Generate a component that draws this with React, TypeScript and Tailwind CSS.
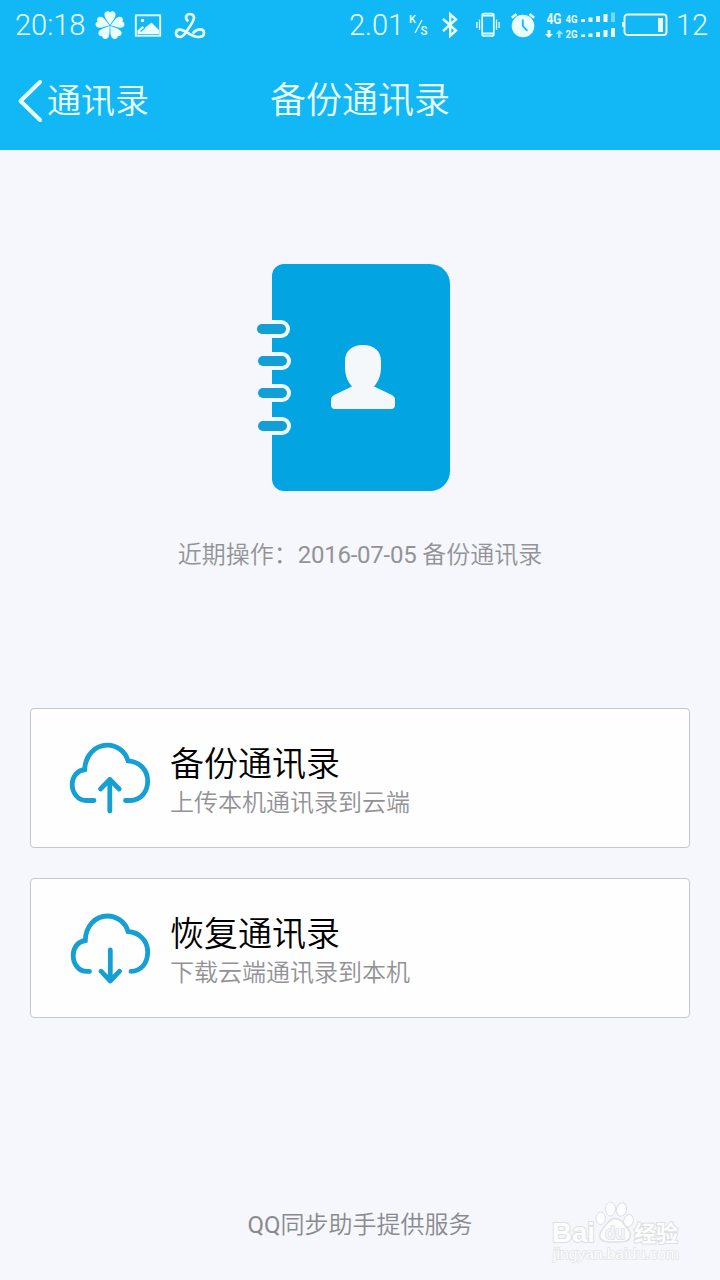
import type { ReactNode } from 'react'

const actions = [
  { title: '备份通讯录', desc: '上传本机通讯录到云端', icon: <CloudUpIcon /> },
  { title: '恢复通讯录', desc: '下载云端通讯录到本机', icon: <CloudDownIcon /> },
]

const rings = [
  { x: 17, y: 74 },
  { x: 18, y: 106 },
  { x: 18, y: 138 },
  { x: 18, y: 171 },
]

const petals = [0, 72, 144, 216, 288]

function CloverIcon() {
  return (
    <svg className="ml-[10px] shrink-0" width="30" height="30" viewBox="0 0 30 30" fill="currentColor">
      {petals.map((angle) => (
        <path
          key={angle}
          transform={`rotate(${angle} 15 15.5)`}
          d="M15 15C12.500 11 9 7.500 9.500 4.100C9.900 1 13.200 .5 15 2.300C16.800 .5 20.100 1 20.500 4.100C21 7.500 17.500 11 15 15Z"
        />
      ))}
    </svg>
  )
}

function PictureIcon() {
  return (
    <svg className="ml-[9px] mt-px shrink-0" width="28" height="23" viewBox="0 0 28 23">
      <rect x="1.8" y="1.3" width="24.4" height="20.4" fill="none" stroke="currentColor" strokeWidth="1.9" />
      <circle cx="8.5" cy="6.5" r="1.7" fill="currentColor" />
      <path d="M3.5 20V16.5L8.5 12L10.5 14L17.5 8.5L25 16V20Z" fill="currentColor" />
      <path d="M6.5 17.5L11 13.5" stroke="#12b7f5" strokeWidth="1.2" />
    </svg>
  )
}

function SwirlIcon() {
  return (
    <svg className="ml-[12px] mt-[2px] shrink-0" width="32" height="28" viewBox="0 0 32 28" fill="none" stroke="currentColor" strokeWidth="2.7" strokeLinecap="round">
      <path d="M13.500 8.500C10.500 5.500 12.500 2 15.800 2C18.800 2 20.600 4.200 19.800 7C18.700 11 15 15.500 12.500 19.500C10.300 22.800 8.400 25 5.800 25C3.600 25 2 23.500 2 21.300C2 19 3.700 17.600 6 17.600C11 17.600 16.500 25 24.500 25C27.800 25 30 23.500 30 21C30 18.700 28.300 17.300 26 17.300C23.500 17.300 21.300 18.500 19.500 20.500" />
    </svg>
  )
}

function BluetoothIcon() {
  return (
    <svg className="ml-[12px] shrink-0" width="18" height="28" viewBox="0 0 18 28" fill="none" stroke="currentColor" strokeWidth="2.4">
      <path d="M2 8L15 19.5L9.2 24.8V3.2L15 8.5L2 20" />
    </svg>
  )
}

function VibrateIcon() {
  return (
    <svg className="ml-[17px] shrink-0" width="24" height="26" viewBox="0 0 24 26" fill="none" stroke="currentColor">
      <rect x="6.2" y="1.5" width="11.6" height="22.5" rx="1.8" strokeWidth="1.7" />
      <path d="M6.5 3.5H17.5M6.5 21.5H17.5" strokeWidth="2.2" />
      <path d="M3.5 7.5V18M20.5 7.5V18M.9 10V16M23.1 10V16" strokeWidth="1.3" />
    </svg>
  )
}

function AlarmIcon() {
  return (
    <svg className="ml-[11px] shrink-0" width="24" height="26" viewBox="0 0 24 26" fill="none">
      <circle cx="12" cy="14" r="11.3" fill="currentColor" />
      <path d="M.8 5.8L5.4 1.9M23.2 5.8L18.6 1.9" stroke="currentColor" strokeWidth="2.6" />
      <path d="M11.8 7.5V14L16.3 18.8" stroke="#12b7f5" strokeWidth="1.8" />
    </svg>
  )
}

function SignalIcon() {
  return (
    <svg className="ml-[10px] shrink-0 font-['Roboto',sans-serif] font-bold" width="72" height="30" viewBox="0 0 72 30" fill="currentColor">
      <text x="1.5" y="13.7" fontSize="14.5" textLength="15" lengthAdjust="spacingAndGlyphs">4G</text>
      <text x="20.5" y="12.5" fontSize="11" textLength="12" lengthAdjust="spacingAndGlyphs">4G</text>
      <text x="20.5" y="28" fontSize="11" textLength="12" lengthAdjust="spacingAndGlyphs">2G</text>
      <path d="M2.5 20H5.500V24H8L4 28L0 24H2.500Z" />
      <path opacity=".6" d="M13 28H15.500V24H18.500L14.300 20L10.500 24H13Z" />
      <path d="M36 9H40V12H36ZM43.5 7.5H47.5V12H43.5ZM51 6H55V12H51ZM58.5 4H62.5V12H58.5Z" />
      <path opacity=".45" d="M66 2.5H70V12H66Z" />
      <path d="M36 24.5H40V27H36ZM43.5 23.5H47.5V27H43.5ZM51 22H55V27H51ZM58.5 20H62.5V27H58.5ZM66 18H70V27H66Z" />
    </svg>
  )
}

function BatteryIcon() {
  return (
    <svg className="ml-[5px] shrink-0" width="46" height="24" viewBox="0 0 46 24">
      <rect x="2.5" y="1.5" width="42" height="20.5" rx="3" fill="none" stroke="currentColor" strokeWidth="1.9" />
      <rect x="0" y="9" width="2.5" height="5" rx="1" fill="currentColor" />
      <rect x="36" y="5" width="5" height="14" fill="currentColor" />
    </svg>
  )
}

function StatusBar() {
  return (
    <div className="flex h-[50px] items-center pl-[15px] text-[#eaffff]">
      <span className="w-[70px] whitespace-nowrap text-[29px] leading-none">20:18</span>
      <CloverIcon />
      <PictureIcon />
      <SwirlIcon />
      <div className="ml-[143px] flex items-center">
        <span className="w-[54px] whitespace-nowrap text-[29px] leading-none">2.01</span>
        <svg className="ml-[6px] shrink-0 font-['Roboto',sans-serif] font-medium" width="20" height="24" viewBox="0 0 20 24" fill="currentColor">
          <text x="0" y="10" fontSize="11" textLength="7" lengthAdjust="spacingAndGlyphs">K</text>
          <path d="M13 7L6 20" stroke="currentColor" strokeWidth="1.3" />
          <text x="11.5" y="22" fontSize="12.5" textLength="7" lengthAdjust="spacingAndGlyphs">S</text>
        </svg>
        <BluetoothIcon />
        <VibrateIcon />
        <AlarmIcon />
        <SignalIcon />
        <BatteryIcon />
        <span className="ml-[8px] whitespace-nowrap text-[29px] leading-none">12</span>
      </div>
    </div>
  )
}

function NavBar() {
  return (
    <nav className="grid h-[100px] grid-cols-[1fr_auto_1fr] items-center text-[#eaffff]">
      <div className="flex items-center pl-[17px] pt-px">
        <svg className="mt-px shrink-0" width="30" height="46" viewBox="0 0 30 46" fill="none" stroke="currentColor" strokeWidth="4" strokeLinecap="round" strokeLinejoin="round">
          <path d="M23 4L3.5 23L23 42" />
        </svg>
        <span className="text-[34px] leading-none">通讯录</span>
      </div>
      <h1 className="pt-0.5 text-[36px] leading-none">备份通讯录</h1>
    </nav>
  )
}

function AddressBook() {
  return (
    <svg className="mx-auto" width="240" height="250" viewBox="0 0 240 250">
      <path
        fill="#02a5e1"
        d="M44 14H190A20 20 0 0 1 210 34V221A20 20 0 0 1 190 241H44A12 12 0 0 1 32 229V26A12 12 0 0 1 44 14Z"
      />
      {rings.map(({ x, y }) => (
        <g key={y}>
          <path fill="#effdff" d={`M32 ${y - 4}H${x + 24}a9 9 0 0 1 0 18H32Z`} />
          <rect x={x} y={y} width="29" height="10" rx="5" fill="#119fd5" />
        </g>
      ))}
      <path
        fill="#f5f8fb"
        d="M105 111C105 101 112 95 123 95S141 101 141 111V117C141 126 138 132 134 136.500L152 145Q155 147 155 149V155Q155 159 151 159H95Q91 159 91 155V149Q91 147 94 145L112 136.500C108 132 105 126 105 117Z"
      />
    </svg>
  )
}

function CloudFrame({ children }: { children: ReactNode }) {
  return (
    <svg className="shrink-0" width="84" height="76" viewBox="0 0 84 76" fill="none" stroke="#159fd2" strokeWidth="4.8" strokeLinecap="round">
      {children}
    </svg>
  )
}

function CloudUpIcon() {
  return (
    <CloudFrame>
      <path d="M26 60.500H18.500C10 60.500 4.200 53 4.200 44.500C4.200 36.500 9.500 30.500 16.800 29.500C17 15.500 27 5.200 39.300 5.200C49 5.200 57.500 11.500 60 20.800C71.500 21.500 79.700 30 79.700 41C79.700 52 72.500 60.500 62 60.500H57.500" />
      <path strokeLinejoin="round" d="M41.800 71V39.500M32.500 49L41.800 39.500L51.200 49" />
    </CloudFrame>
  )
}

function CloudDownIcon() {
  return (
    <CloudFrame>
      <path d="M21.500 61.400H19C10.500 61.400 5.200 54 5.200 45.500C5.200 37.500 10 31.500 17.300 30.500C17.500 16 27.500 6 39.300 6C49 6 57.500 12.200 60 21.500C71.500 22.200 79.700 31 79.700 42C79.700 53 73 61.400 63 61.400" />
      <path strokeLinejoin="round" d="M42.300 40V71M33 61.200L42.300 71L51.600 61.200" />
    </CloudFrame>
  )
}

function Watermark() {
  return (
    <svg
      className="absolute right-[36px] bottom-[12px] font-['Liberation_Sans','Noto_Sans_CJK_SC',sans-serif]"
      width="136"
      height="68"
      viewBox="0 0 136 68"
      fill="#fcfdfe"
      stroke="#dddfe3"
      strokeWidth="1"
    >
      <g fontWeight="700">
        <text x="4" y="42" fontSize="28" textLength="43" lengthAdjust="spacingAndGlyphs" paintOrder="stroke" strokeWidth="2">Bai</text>
        <ellipse cx="52.700" cy="18.300" rx="4.800" ry="6.300" />
        <ellipse cx="62.500" cy="9" rx="5" ry="7" />
        <ellipse cx="73.500" cy="9.500" rx="5" ry="6.800" transform="rotate(12 73.500 9.500)" />
        <ellipse cx="80.500" cy="20.700" rx="4.800" ry="6.200" transform="rotate(15 80.500 20.700)" />
        <path
          strokeWidth="1.400"
          d="M67 18.500C72 18.500 74.500 22 77.500 26C81 30 83.500 33 82 37.500C80.500 42 76 42 67 42S53.500 42 52 37.500C50.500 33 54 30 57 26C60.500 22 62 18.500 67 18.500Z"
        />
        <text x="57" y="39" fontSize="18" textLength="20" lengthAdjust="spacingAndGlyphs" fill="#f2f4f8" strokeWidth="1.400" paintOrder="stroke">du</text>
        <text x="86" y="41" fontSize="22" textLength="44" lengthAdjust="spacingAndGlyphs" paintOrder="stroke" strokeWidth="2">经验</text>
      </g>
      <text x="5" y="58.500" fontSize="14.500" textLength="126" lengthAdjust="spacingAndGlyphs" paintOrder="stroke" stroke="#e3e5e9" strokeWidth="1.500">jingyan.baidu.com</text>
    </svg>
  )
}

export default function App() {
  return (
    <div className="relative flex h-[1280px] w-[720px] flex-col overflow-hidden bg-[#f5f7fc] font-['Roboto','Noto_Sans_CJK_SC',sans-serif] font-[350]">
      <header className="h-[150px] shrink-0 bg-[#12b7f5]">
        <StatusBar />
        <NavBar />
      </header>

      <main className="flex flex-1 flex-col px-[30px] pt-[100px]">
        <AddressBook />
        <p className="mt-[37px] text-center text-2xl leading-9 text-[#939396]">
          近期操作：<span className="font-normal tracking-[-0.25px]">2016-07-05</span> 备份通讯录
        </p>

        <div className="mt-[135px] flex flex-col gap-[30px]">
          {actions.map((action) => (
            <button
              key={action.title}
              className="flex h-[140px] items-center gap-[18px] rounded-[4px] border border-[#c5c7cc] bg-[#fefefe] pl-[37px] text-left"
            >
              {action.icon}
              <span className="flex flex-col pt-2">
                <span className="text-[34px] leading-[42px] text-black">{action.title}</span>
                <span className="text-2xl leading-9 text-[#929296]">{action.desc}</span>
              </span>
            </button>
          ))}
        </div>
      </main>

      <footer className="pb-[37px] text-center text-2xl leading-9 text-[#8a8a8e]">
        <span className="font-normal">QQ</span>同步助手提供服务
      </footer>
      <Watermark />
    </div>
  )
}
